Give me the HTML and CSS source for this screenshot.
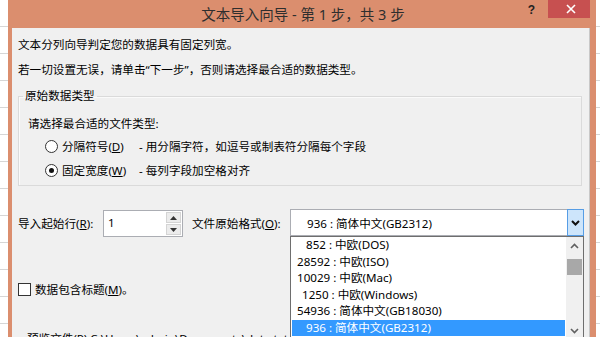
FILE: index.html
```html
<!DOCTYPE html>
<html lang="zh-CN">
<head>
  <meta charset="UTF-8">
  <title>文本导入向导</title>
  <link rel="stylesheet" href="styles.css">
</head>
<body>
  <div class="window">
    <div class="titlebar">
      <span class="title">文本导入向导 - 第 1 步，共 3 步</span>
      <span class="help">?</span>
      <span class="close">
        <svg width="10" height="10" viewBox="0 0 10 10"><path d="M1 1 L9 9 M9 1 L1 9" stroke="#fff" stroke-width="1.6" fill="none"/></svg>
      </span>
    </div>

    <div class="content">
      <p class="intro">文本分列向导判定您的数据具有固定列宽。</p>
      <p class="intro">若一切设置无误，请单击“下一步”，否则请选择最合适的数据类型。</p>

      <fieldset class="group">
        <legend>原始数据类型</legend>
        <div class="prompt">请选择最合适的文件类型:</div>
        <div class="radio-row">
          <span class="radio"></span>
          <span class="radio-label">分隔符号(<u>D</u>)</span>
          <span class="radio-desc">- 用分隔字符，如逗号或制表符分隔每个字段</span>
        </div>
        <div class="radio-row">
          <span class="radio checked"></span>
          <span class="radio-label">固定宽度(<u>W</u>)</span>
          <span class="radio-desc">- 每列字段加空格对齐</span>
        </div>
      </fieldset>

      <div class="start-row">
        <span class="field-label">导入起始行(<u>R</u>):</span>
        <div class="spin">
          <span class="spin-val">1</span>
          <div class="spin-btns">
            <span class="spin-btn">
              <svg width="7" height="4" viewBox="0 0 7 4"><path d="M0 4 L3.5 0 L7 4 Z" fill="#333"/></svg>
            </span>
            <span class="spin-btn">
              <svg width="7" height="4" viewBox="0 0 7 4"><path d="M0 0 L3.5 4 L7 0 Z" fill="#333"/></svg>
            </span>
          </div>
        </div>
        <span class="field-label format-label">文件原始格式(<u>O</u>):</span>
        <div class="combo">
          <span class="combo-val">936 : 简体中文(GB2312)</span>
          <span class="combo-btn">
            <svg width="9" height="6" viewBox="0 0 9 6"><path d="M1 1 L4.5 4.5 L8 1" stroke="#111" stroke-width="2" fill="none"/></svg>
          </span>

          <div class="combo-list">
            <ul class="items">
              <li class="w3">852 : 中欧(DOS)</li>
              <li>28592 : 中欧(ISO)</li>
              <li>10029 : 中欧(Mac)</li>
              <li class="w4">1250 : 中欧(Windows)</li>
              <li>54936 : 简体中文(GB18030)</li>
              <li class="w3 selected">936 : 简体中文(GB2312)</li>
            </ul>
            <div class="scrollbar">
              <span class="arrow">
                <svg width="9" height="6" viewBox="0 0 9 6"><path d="M1 5 L4.5 1.5 L8 5" stroke="#606060" stroke-width="1.6" fill="none"/></svg>
              </span>
              <span class="thumb"></span>
              <span class="track"></span>
              <span class="arrow">
                <svg width="9" height="6" viewBox="0 0 9 6"><path d="M1 1 L4.5 4.5 L8 1" stroke="#606060" stroke-width="1.6" fill="none"/></svg>
              </span>
            </div>
          </div>
        </div>
      </div>

      <div class="check-row">
        <span class="check"></span>
        <span>数据包含标题(<u>M</u>)。</span>
      </div>

      <div class="preview">预览文件(P) C:\Users\admin\Documents\data.txt</div>
    </div>
  </div>
</body>
</html>
```

FILE: styles.css
```css
body {
  margin: 0;
  height: 337px;
  overflow: hidden;
  font-family: "Noto Sans", "Noto Sans CJK SC", sans-serif;
  font-size: 11.6px;
  color: #000;
  background-color: #ffffff;
  /* hoja de cálculo detrás del diálogo */
  background-image: repeating-linear-gradient(to bottom, transparent 0, transparent 26px, #d6d6d6 26px, #d6d6d6 27px);
}

.window {
  margin-left: 8px;
  width: 578px;
  height: 337px;
  overflow: hidden;
  background: #db8e6e;
  border-left: 4px solid #db8e6e;
  border-right: 6px solid #db8e6e;
  position: relative;
}

/* barra de título */
.titlebar {
  height: 28px;
  display: flex;
  align-items: center;
  justify-content: center;
}
.title {
  font-size: 14.5px;
  color: #2e2e2e;
  margin-left: 4px;
  margin-top: -2px;
}
.help {
  position: absolute;
  top: 3px;
  right: 55px;
  font-size: 12px;
  font-weight: bold;
  color: #222;
  font-family: "Liberation Sans", sans-serif;
}
.close {
  position: absolute;
  top: 0;
  right: -3px;
  width: 45px;
  height: 18px;
  background: #c75050;
  display: flex;
  align-items: center;
  justify-content: center;
}

/* área del contenido */
.content {
  height: 309px;
  background: #f0f0f0;
  border-right: 1px solid #c8c8c8;
  padding: 9px 0 0 6px;
}
.intro {
  margin: 0 0 9px 0;
  line-height: 16px;
}

.group {
  margin: 10px 7px 0 0;
  padding: 0 0 3px 9px;
  border: 1px solid #dadada;
  box-shadow: inset 1px 1px 0 #fafafa;
}
.group legend {
  margin-left: -5px;
  padding: 0 2px;
  line-height: 16px;
}
.prompt {
  line-height: 16px;
  margin-top: 12px;
  margin-bottom: 2px;
}
.radio-row {
  height: 24px;
  display: flex;
  align-items: center;
}
.radio {
  width: 11px;
  height: 11px;
  margin-left: 17px;
  margin-right: 4px;
  border: 1px solid #333;
  border-radius: 50%;
  background: #fff;
  display: flex;
  align-items: center;
  justify-content: center;
}
.radio.checked::after {
  content: "";
  width: 5px;
  height: 5px;
  border-radius: 50%;
  background: #111;
}
.radio-label {
  width: 77px;
}

/* fila de inicio y formato */
.start-row {
  margin-top: 23px;
  height: 27px;
  display: flex;
  align-items: center;
}
.field-label {
  width: 85px;
}
.format-label {
  width: 98px;
  margin-left: 9px;
}
.spin {
  width: 78px;
  height: 25px;
  border: 1px solid #abadb3;
  background: #fff;
  display: flex;
  align-self: flex-start;
  margin-top: 1px;
}
.spin-val {
  flex: 1;
  padding-left: 4px;
  line-height: 24px;
}
.spin-btns {
  width: 15px;
  display: flex;
  flex-direction: column;
  padding: 1px 1px 1px 0;
}
.spin-btn {
  flex: 1;
  background: #ececec;
  border: 1px solid #d4d4d4;
  display: flex;
  align-items: center;
  justify-content: center;
}
.spin-btn + .spin-btn {
  margin-top: 1px;
}

.combo {
  position: relative;
  width: 292px;
  height: 25px;
  border: 1px solid #abadb3;
  background: #fff;
  display: flex;
  align-items: center;
}
.combo-val {
  flex: 1;
  padding-left: 16px;
}
.combo-btn {
  width: 15px;
  height: 25px;
  background: #cde5fb;
  border: 1px solid #569de5;
  margin-right: -1px;
  display: flex;
  align-items: center;
  justify-content: center;
}

/* lista desplegada, encima del resto */
.combo-list {
  position: absolute;
  top: 26px;
  left: -1px;
  width: 292px;
  height: 102px;
  border: 1px solid #6e6e6e;
  border-bottom: none;
  background: #fff;
  display: flex;
  z-index: 10;
}
.items {
  list-style: none;
  margin: 0;
  padding: 0 1px;
  flex: 1;
}
.items li {
  height: 16.5px;
  line-height: 16.5px;
  padding-left: 5px;
  white-space: nowrap;
}
.items li.w3 {
  padding-left: 14px;
}
.items li.w4 {
  padding-left: 10px;
}
.items li.selected {
  background: #3399ff;
  color: #fff;
}
.scrollbar {
  width: 17px;
  background: #f0f0f0;
  display: flex;
  flex-direction: column;
  align-items: center;
}
.scrollbar .arrow {
  height: 17px;
  display: flex;
  align-items: center;
}
.thumb {
  width: 15px;
  height: 16px;
  margin-top: 5px;
  background: #a8a8a8;
}
.track {
  flex: 1;
}

.check-row {
  margin-top: 45px;
  height: 16px;
  display: flex;
  align-items: center;
}
.check {
  width: 11px;
  height: 11px;
  border: 1px solid #333;
  background: #fff;
  margin-right: 4px;
}

.preview {
  margin-top: 34px;
  margin-left: 9px;
  line-height: 16px;
}
```
